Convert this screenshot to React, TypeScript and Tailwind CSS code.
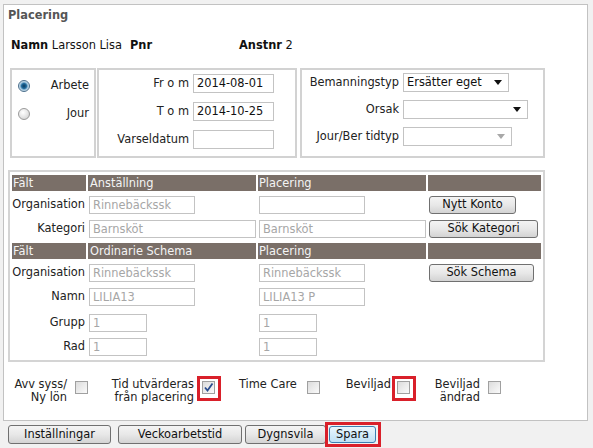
import React from "react";

const font = { fontFamily: '"DejaVu Sans", Verdana, sans-serif' };

function TInput({ w, value, disabled }: { w: number; value?: string; disabled?: boolean }) {
  return (
    <div
      className={`h-[19px] border border-[#c3c3c3] bg-white pl-[3px] text-[11.4px] leading-[17px] whitespace-nowrap overflow-hidden ${disabled ? "text-[#a3a3a3]" : "text-[#111]"}`}
      style={{ width: w }}
    >
      {value}
    </div>
  );
}

function Sel({ w, value, disabled }: { w: number; value?: string; disabled?: boolean }) {
  return (
    <div
      className="h-[19px] border border-[#c3c3c3] bg-white flex items-center justify-between pl-[3px] pr-[6px] text-[11.4px] text-[#111]"
      style={{ width: w }}
    >
      <span>{value}</span>
      <svg width="8" height="5" viewBox="0 0 8 5">
        <path d="M0 0 L8 0 L4 5 Z" fill={disabled ? "#a8a8a8" : "#111"} />
      </svg>
    </div>
  );
}

function Btn({ w, children, h = 18 }: { w: number; children: React.ReactNode; h?: number }) {
  return (
    <div
      className="border border-[#707070] rounded-[3px] bg-linear-to-b from-[#f4f4f4] via-[#e8e8e8] to-[#d3d3d3] text-[11.4px] text-[#111] flex items-center justify-center shrink-0"
      style={{ width: w, height: h }}
    >
      {children}
    </div>
  );
}

function Radio({ checked }: { checked?: boolean }) {
  return checked ? (
    <div className="w-[12px] h-[12px] rounded-full border border-[#4b6f8c] bg-[radial-gradient(circle,#0d3b5e_0%,#1f6a9c_35%,#9fc4dc_55%,#e6eef4_80%)]" />
  ) : (
    <div className="w-[12px] h-[12px] rounded-full border border-[#9a9a9a] bg-[radial-gradient(circle_at_40%_35%,#ffffff_0%,#e6e6e6_50%,#c8c8c8_100%)]" />
  );
}

function Check({ checked }: { checked?: boolean }) {
  return (
    <div className="w-[13px] h-[13px] border border-[#a0a0a0] bg-linear-to-br from-[#dcdcdc] to-[#fafafa] flex items-center justify-center shrink-0">
      {checked && (
        <svg width="11" height="11" viewBox="0 0 11 11">
          <path d="M2 5.5 L4.5 8.5 L9.5 1.5" stroke="#2a4d8f" strokeWidth="1.8" fill="none" />
        </svg>
      )}
    </div>
  );
}

function RedBox({ children }: { children: React.ReactNode }) {
  return (
    <div className="border-[3px] border-[#d9202a] w-[24px] h-[25px] pt-[2px] pl-[2px] shrink-0">{children}</div>
  );
}

const cols = "grid grid-cols-[74px_168px_168px_113px] gap-x-[2px]";

function Header({ a, b }: { a: string; b: string }) {
  return (
    <div className={`${cols} h-[16px] text-[11.4px] leading-[16px] text-[#f4f4f4]`}>
      <div className="bg-[#7a6f68] pl-[1px]">Fält</div>
      <div className="bg-[#7a6f68] pl-[2px]">{a}</div>
      <div className="bg-[#7a6f68] pl-[1px]">{b}</div>
      <div className="bg-[#7a6f68]" />
    </div>
  );
}

function Row({ label, mt, a, b, c }: { label: string; mt: number; a: React.ReactNode; b: React.ReactNode; c?: React.ReactNode }) {
  return (
    <div className={`${cols} h-[18px] items-center`} style={{ marginTop: mt }}>
      <div className="text-right pr-[1px] text-[11.4px] text-[#222] whitespace-nowrap">{label}</div>
      <div className="pl-[1px]">{a}</div>
      <div className="pl-[1px]">{b}</div>
      <div className="pl-[1px]">{c}</div>
    </div>
  );
}

function TI({ w, v, d = true }: { w: number; v?: string; d?: boolean }) {
  return (
    <div
      className={`h-[18px] border border-[#c3c3c3] bg-white pl-[3px] text-[11.4px] leading-[16px] whitespace-nowrap overflow-hidden ${d ? "text-[#a6a6a6]" : "text-[#111]"}`}
      style={{ width: w }}
    >
      {v}
    </div>
  );
}

export default function App() {
  return (
    <div className="w-[593px] h-[448px] bg-[#f1f1f1] overflow-hidden text-[11.4px] text-[#222]" style={font}>
      <div className="ml-[3px] mt-[4px] w-[585px] h-[417px] border border-[#c2c2c2] bg-white flex flex-col">
        <div className="ml-[4px] mt-[4px] font-bold text-[#555] leading-[13px]">Placering</div>

        <div className="ml-[7px] mt-[17px] flex leading-[13px] text-[#111]">
          <div className="w-[119px] whitespace-nowrap">
            <span className="font-bold">Namn</span> Larsson Lisa
          </div>
          <div className="w-[109px] font-bold">Pnr</div>
          <div>
            <span className="font-bold">Anstnr</span> 2
          </div>
        </div>

        <div className="ml-[6px] mt-[16px] flex">
          <div className="w-[86px] h-[90px] border-2 border-[#d2d2d2] pt-[6px] flex flex-col">
            <div className="h-[20px] flex items-center pl-[6px] pr-[5px]">
              <Radio checked />
              <div className="flex-1 text-right">Arbete</div>
            </div>
            <div className="h-[20px] mt-[8px] flex items-center pl-[6px] pr-[5px]">
              <Radio />
              <div className="flex-1 text-right">Jour</div>
            </div>
          </div>

          <div className="ml-[1px] w-[200px] h-[90px] border-2 border-[#d2d2d2] pt-[4px] pr-[21px] flex flex-col gap-[9px]">
            <div className="flex items-center justify-end gap-[4px]">
              <span>Fr o m</span>
              <TInput w={81} value="2014-08-01" />
            </div>
            <div className="flex items-center justify-end gap-[4px]">
              <span>T o m</span>
              <TInput w={81} value="2014-10-25" />
            </div>
            <div className="flex items-center justify-end gap-[4px]">
              <span>Varseldatum</span>
              <TInput w={81} />
            </div>
          </div>

          <div className="ml-[3px] w-[245px] h-[90px] border-2 border-[#d2d2d2] pt-[3px] flex flex-col gap-[8px]">
            <div className="flex items-center gap-[4px]">
              <div className="w-[97px] text-right whitespace-nowrap">Bemanningstyp</div>
              <Sel w={106} value="Ersätter eget" />
            </div>
            <div className="flex items-center gap-[4px]">
              <div className="w-[97px] text-right">Orsak</div>
              <Sel w={125} />
            </div>
            <div className="flex items-center gap-[4px]">
              <div className="w-[97px] text-right whitespace-nowrap">Jour/Ber tidtyp</div>
              <Sel w={109} disabled />
            </div>
          </div>
        </div>

        <div className="ml-[4px] mt-[12px] w-[537px] h-[192px] border-2 border-[#d4d4d4] pt-[3px] pl-[2px]">
          <Header a="Anställning" b="Placering" />
          <Row label="Organisation" mt={5} a={<TI w={106} v="Rinnebäckssk" />} b={<TI w={106} />} c={<Btn w={87}>Nytt Konto</Btn>} />
          <Row label="Kategori" mt={6} a={<TI w={167} v="Barnsköt" />} b={<TI w={167} v="Barnsköt" />} c={<Btn w={109}>Sök Kategori</Btn>} />
          <div className="mt-[5px]">
            <Header a="Ordinarie Schema" b="Placering" />
          </div>
          <Row label="Organisation" mt={5} a={<TI w={106} v="Rinnebäckssk" />} b={<TI w={106} v="Rinnebäckssk" />} c={<Btn w={105}>Sök Schema</Btn>} />
          <Row label="Namn" mt={6} a={<TI w={106} v="LILIA13" />} b={<TI w={106} v="LILIA13 P" />} />
          <Row label="Grupp" mt={8} a={<TI w={58} v="1" />} b={<TI w={58} v="1" />} />
          <Row label="Rad" mt={6} a={<TI w={58} v="1" />} b={<TI w={58} v="1" />} />
        </div>

        <div className="mt-[14px] ml-[4px] flex items-start leading-[13px]">
          <div className="w-[59px] text-right mt-[2px] whitespace-nowrap">
            Avv syss/
            <br />
            Ny lön
          </div>
          <div className="ml-[8px] mt-[5px]">
            <Check />
          </div>
          <div className="w-[106px] text-right mt-[2px] whitespace-nowrap">
            Tid utvärderas
            <br />
            från placering
          </div>
          <div className="ml-[3px]">
            <RedBox>
              <Check checked />
            </RedBox>
          </div>
          <div className="ml-[18px] w-[60px] mt-[2px] whitespace-nowrap">Time Care</div>
          <div className="ml-[8px] mt-[5px]">
            <Check />
          </div>
          <div className="ml-[23px] w-[48px] mt-[2px] text-right">Beviljad</div>
          <div className="ml-[1px]">
            <RedBox>
              <Check />
            </RedBox>
          </div>
          <div className="ml-[18px] w-[46px] text-right mt-[2px] whitespace-nowrap">
            Beviljad
            <br />
            ändrad
          </div>
          <div className="ml-[8px] mt-[5px]">
            <Check />
          </div>
        </div>
      </div>

      <div className="ml-[8px] mt-[1px] flex items-center">
        <Btn w={103} h={19}>Inställningar</Btn>
        <div className="ml-[7px]">
          <Btn w={124} h={19}>Veckoarbetstid</Btn>
        </div>
        <div className="ml-[3px]">
          <Btn w={81} h={19}>Dygnsvila</Btn>
        </div>
        <div className="ml-[-1px] border-[3px] border-[#d9202a] w-[56px] h-[25px] pl-[1px] pt-[1px]">
          <div className="w-[47px] h-[17px] rounded-[3px] border border-[#3c7fb1] bg-linear-to-b from-[#eaf6fd] to-[#bfe1f5] text-[11.4px] text-[#111] flex items-center justify-center">
            Spara
          </div>
        </div>
      </div>
    </div>
  );
}
